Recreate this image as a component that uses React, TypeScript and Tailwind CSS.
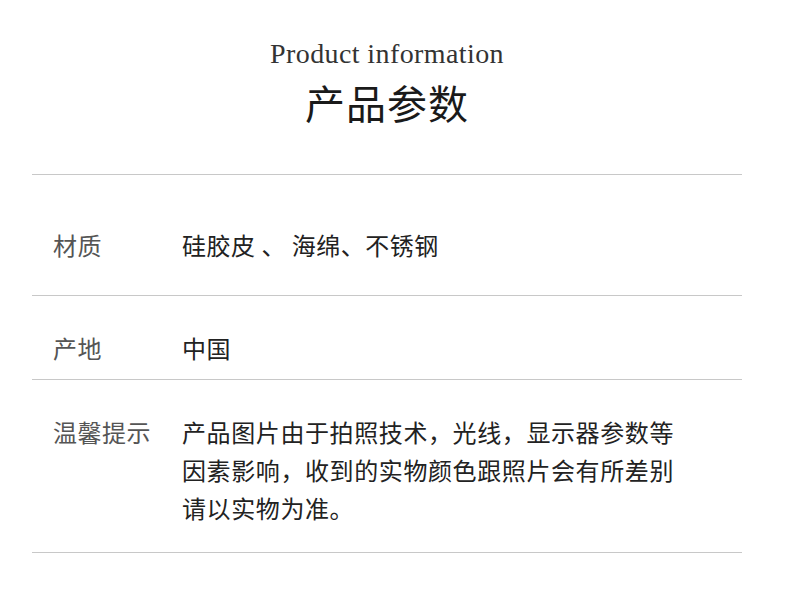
import React from "react";

const cjk = { fontFamily: '"Noto Sans CJK SC", "Noto Sans", sans-serif' };

const rows = [
  { label: "材质", value: "硅胶皮 、 海绵、不锈钢", h: "h-[121px]" },
  { label: "产地", value: "中国", h: "h-[84px]" },
];

export default function App() {
  return (
    <div className="w-[790px] h-[589px] bg-white overflow-hidden">
      {/* heading */}
      <div className="pt-[38px] pr-[16px] text-center">
        <p
          className="text-[28px] leading-[32px] text-[#333] tracking-[0.4px]"
          style={{ fontFamily: '"Liberation Serif", serif' }}
        >
          Product information
        </p>
        <h1 className="mt-[8px] text-[40px] leading-[48px] font-normal text-[#1a1a1a] tracking-[1px]" style={cjk}>
          产品参数
        </h1>
      </div>

      {/* table */}
      <div className="mt-[48px] ml-[32px] w-[710px] border-t border-[#c8c8c8]" style={cjk}>
        {rows.map((r) => (
          <div key={r.label} className={`flex items-center border-b border-[#c8c8c8] pt-[20px] ${r.h}`}>
            <div className="w-[150px] pl-[21px] text-[24px] text-[#555] tracking-[0.5px]">{r.label}</div>
            <div className="text-[24px] text-[#222] tracking-[0.5px]">{r.value}</div>
          </div>
        ))}
        <div className="flex border-b border-[#c8c8c8] pt-[33px] pb-[25px]">
          <div className="w-[150px] pl-[21px] text-[24px] leading-[38px] text-[#555] tracking-[0.5px]">温馨提示</div>
          <div className="text-[24px] leading-[38px] text-[#222] tracking-[0.6px]">
            <p>产品图片由于拍照技术，光线，显示器参数等</p>
            <p>因素影响，收到的实物颜色跟照片会有所差别</p>
            <p>请以实物为准。</p>
          </div>
        </div>
      </div>
    </div>
  );
}
